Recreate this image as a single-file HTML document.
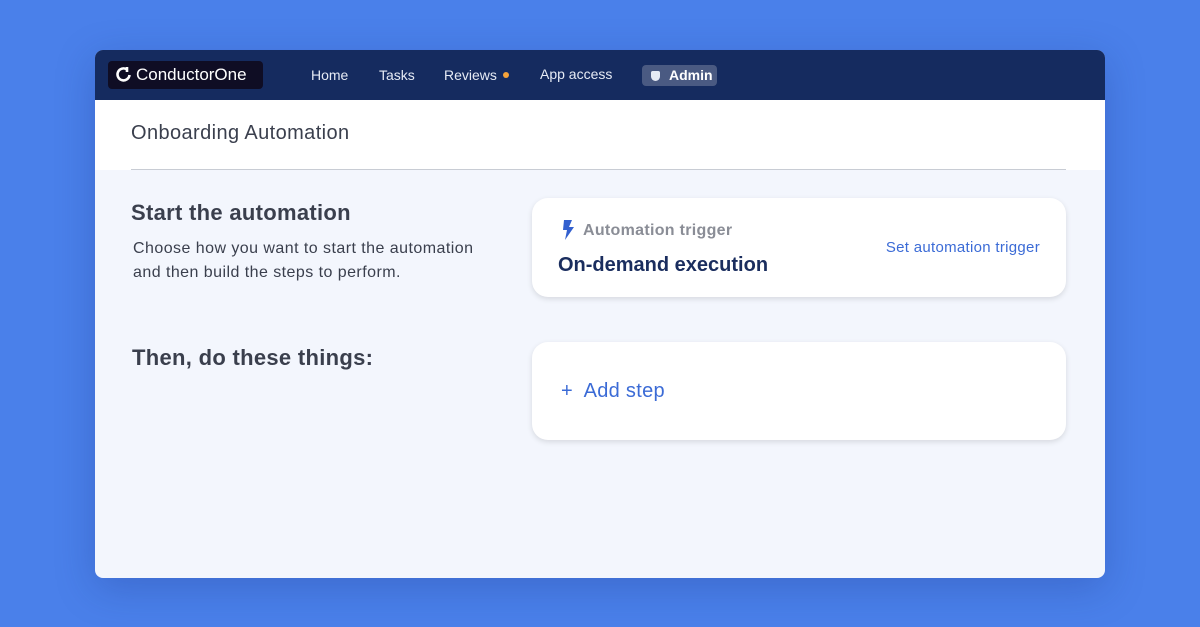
<!DOCTYPE html>
<html><head><meta charset="utf-8"><style>
*{margin:0;padding:0;box-sizing:border-box}
body{width:1200px;height:627px;background:#4a80ea;font-family:"Liberation Sans",sans-serif;position:relative;overflow:hidden}
.win{position:absolute;left:95px;top:50px;width:1010px;height:528px;background:#f3f6fd;border-radius:8px;overflow:hidden;box-shadow:0 10px 40px rgba(20,40,120,.25)}
.nav{height:50px;background:#152b5f;position:relative;color:#e6ebf5;font-size:14px}
.logo{position:absolute;left:13px;top:11px;width:155px;height:28px;background:#0f0d24;border-radius:4px;color:#fff;font-size:17px;line-height:28px;padding-left:8px}
.logo b{font-weight:normal;margin-left:4px}
.nav span{position:absolute;top:17px}
.dot{display:inline-block;width:6px;height:6px;border-radius:50%;background:#f5a33a;margin-left:6px;vertical-align:2px}
.admin{position:absolute;left:547px;top:15px;width:75px;height:21px;background:#4a5a82;border-radius:4px;color:#fff;font-weight:bold;font-size:14px;line-height:21px;padding-left:27px}
.admin i{position:absolute;left:9px;top:6px;width:9px;height:10px;background:#e6ebf5;border-radius:2px 2px 5px 5px}
.head{height:70px;background:#fff;position:relative}
.head h1{position:absolute;left:36px;top:22px;font-size:20px;letter-spacing:.4px;font-weight:normal;color:#3a3f4d}
.head .line{position:absolute;left:36px;right:39px;top:69px;height:1px;background:#c8ccd4}
h2{position:absolute;font-size:22px;letter-spacing:.3px;color:#3a3f4d}
p.d{position:absolute;left:38px;top:187px;font-size:16px;letter-spacing:.45px;line-height:23.5px;color:#3a3f4d}
.card{position:absolute;left:437px;width:534px;background:#fff;border-radius:16px;box-shadow:0 2px 6px rgba(0,0,0,.12)}
</style></head><body>
<div class="win">
<div class="nav">
<div class="logo"><svg width="16" height="16" viewBox="0 0 16 16" style="vertical-align:-2px"><path d="M11 3.5A6 6 0 1 0 13.5 9" fill="none" stroke="#fff" stroke-width="2.6"/><path d="M11 1v5" stroke="#fff" stroke-width="2.6"/></svg><b>ConductorOne</b></div>
<span style="left:216px">Home</span>
<span style="left:284px">Tasks</span>
<span style="left:349px">Reviews<i class="dot"></i></span>
<span style="left:445px;top:16px">App access</span>
<div class="admin"><i></i>Admin</div>
</div>
<div class="head"><h1>Onboarding Automation</h1><div class="line"></div></div>
<h2 style="left:36px;top:150px">Start the automation</h2>
<p class="d">Choose how you want to start the automation<br>and then build the steps to perform.</p>
<h2 style="left:37px;top:295px">Then, do these things:</h2>
<div class="card" style="top:148px;height:99px">
<svg style="position:absolute;left:30px;top:22px" width="12" height="20" viewBox="0 0 12 20"><path d="M2 0h8L7 7h5L3 20l2-10H1z" fill="#3360cf"/></svg>
<div style="position:absolute;left:51px;top:24px;font-size:16px;letter-spacing:.3px;font-weight:bold;color:#8a8d96">Automation trigger</div>
<div style="position:absolute;left:26px;top:56px;font-size:20px;font-weight:bold;color:#1a2d5e">On-demand execution</div>
<div style="position:absolute;right:26px;top:41px;font-size:15px;letter-spacing:.3px;color:#3b6bd6">Set automation trigger</div>
</div>
<div class="card" style="top:292px;height:98px">
<div style="position:absolute;left:29px;top:38px;font-size:20px;letter-spacing:.3px;color:#3b6bd6">+&nbsp; Add step</div>
</div>
</div>
</body></html>
